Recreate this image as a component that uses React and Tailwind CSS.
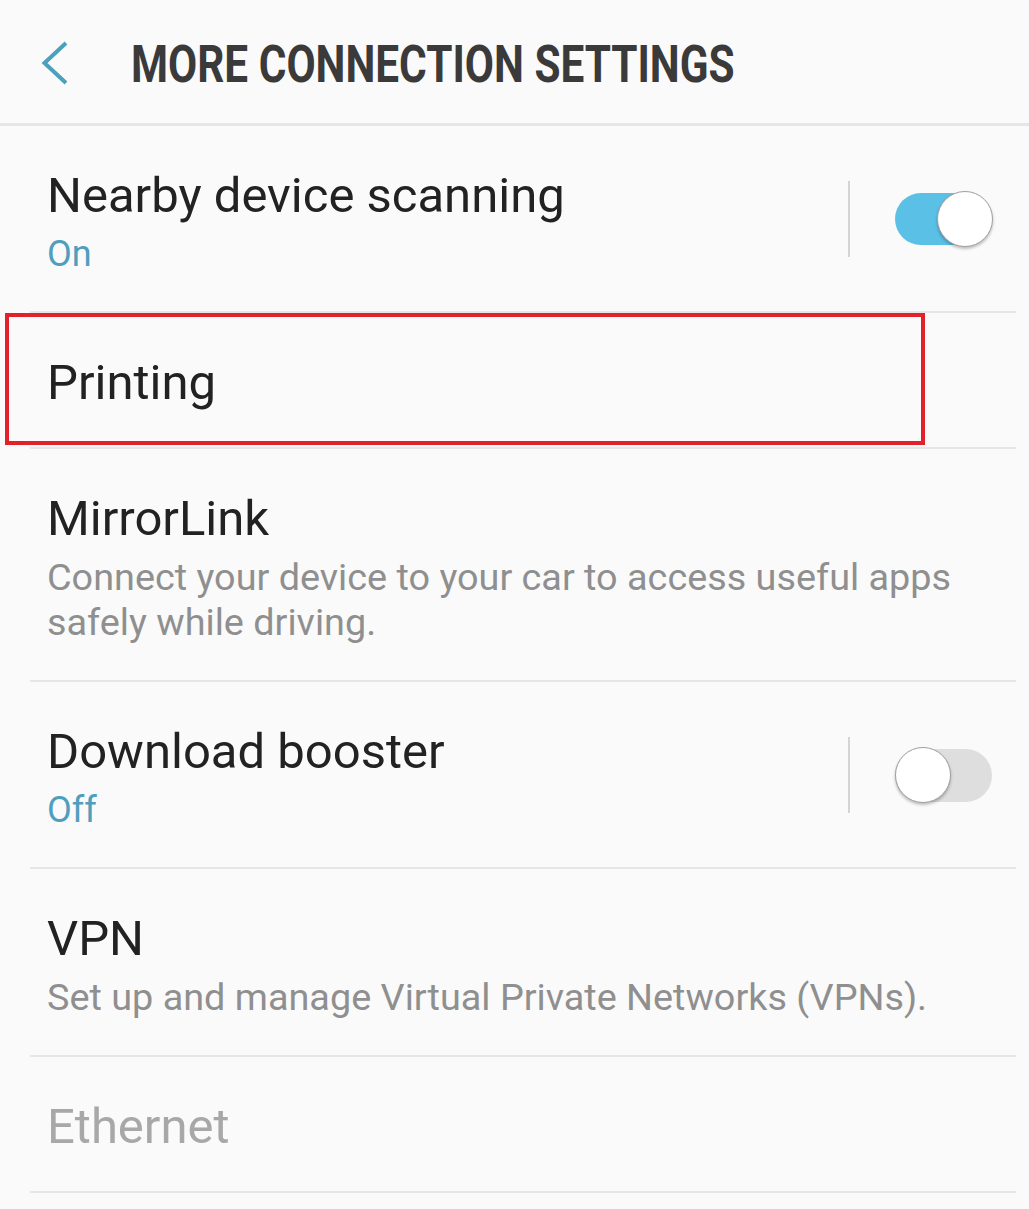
import React from 'react'

const font = "font-['Roboto','Liberation_Sans',sans-serif]"

function Toggle({ on }) {
  return (
    <div className="relative w-[98px] h-[56px]">
      {on ? (
        <>
          <div className="absolute left-0 top-[2px] w-[90px] h-[52px] rounded-full bg-[#5bc0e6]" />
          <div className="absolute right-0 top-0 w-[56px] h-[56px] rounded-full bg-white border border-[#a0a0a0] shadow-[0_2px_3px_rgba(0,0,0,0.25)]" />
        </>
      ) : (
        <>
          <div className="absolute left-0 top-[2px] w-[97px] h-[53px] rounded-full bg-[#dedede]" />
          <div className="absolute left-0 top-0 w-[56px] h-[56px] rounded-full bg-white border border-[#a0a0a0] shadow-[0_2px_3px_rgba(0,0,0,0.25)]" />
        </>
      )}
    </div>
  )
}

function SwitchRow({ title, status, on }) {
  return (
    <div className="ml-[30px] mr-[13px] h-[187px] border-b-2 border-[#e6e6e6] flex items-center">
      <div className="flex-1 pl-[17px] self-start pt-[42px]">
        <div className="text-[49px] leading-[56px] text-[#222222]">{title}</div>
        <div className="mt-2 text-[36px] leading-[45px] text-[#4f9ebd]">{status}</div>
      </div>
      <div className="w-[2px] h-[76px] bg-[#d4d4d4]" />
      <div className="ml-[45px] mr-[23px]">
        <Toggle on={on} />
      </div>
    </div>
  )
}

function TextRow({ title, desc, height = 'h-[188px]' }) {
  return (
    <div className={`ml-[30px] mr-[13px] ${height} border-b-2 border-[#e6e6e6] pl-[17px] pt-[42px]`}>
      <div className="text-[49px] leading-[56px] text-[#222222]">{title}</div>
      <div className="mt-2 text-[37.8px] leading-[45px] text-[#8f8f8f] pr-[40px]">{desc}</div>
    </div>
  )
}

export default function App() {
  return (
    <div className={`${font} w-[1029px] h-[1209px] bg-[#fafafa] overflow-hidden`}>
      {/* Header */}
      <header className="h-[126px] border-b-[3px] border-[#e6e6e6] flex items-start pt-[35px]">
        <svg width="80" height="60" viewBox="0 0 80 60" className="mt-[-2px] shrink-0">
          <path d="M66 10 L44.5 30 L66 50" fill="none" stroke="#4d9fbe" strokeWidth="4" strokeLinecap="butt" strokeLinejoin="miter" />
        </svg>
        <div className="ml-[51px] text-[51px] leading-[60px] font-bold text-[#3a3a3a] whitespace-nowrap inline-block origin-left scale-x-[0.83]">
          MORE CONNECTION SETTINGS
        </div>
      </header>

      <SwitchRow title="Nearby device scanning" status="On" on />

      {/* Printing */}
      <div className="relative ml-[30px] mr-[13px] h-[136px] border-b-2 border-[#e6e6e6] pl-[17px] pt-[42px]">
        <div className="text-[49px] leading-[56px] text-[#222222]">Printing</div>
        <div className="absolute left-[-25px] top-0 w-[920px] h-[132px] border-4 border-[#e3212b]" />
      </div>

      <TextRow
        title="MirrorLink"
        desc="Connect your device to your car to access useful apps safely while driving."
        height="h-[233px]"
      />

      <SwitchRow title="Download booster" status="Off" on={false} />

      <TextRow title="VPN" desc="Set up and manage Virtual Private Networks (VPNs)." height="h-[188px]" />

      <div className="ml-[30px] mr-[13px] h-[136px] border-b-2 border-[#e6e6e6] pl-[17px] pt-[42px]">
        <div className="text-[49px] leading-[56px] text-[#a8a8a8]">Ethernet</div>
      </div>
    </div>
  )
}
